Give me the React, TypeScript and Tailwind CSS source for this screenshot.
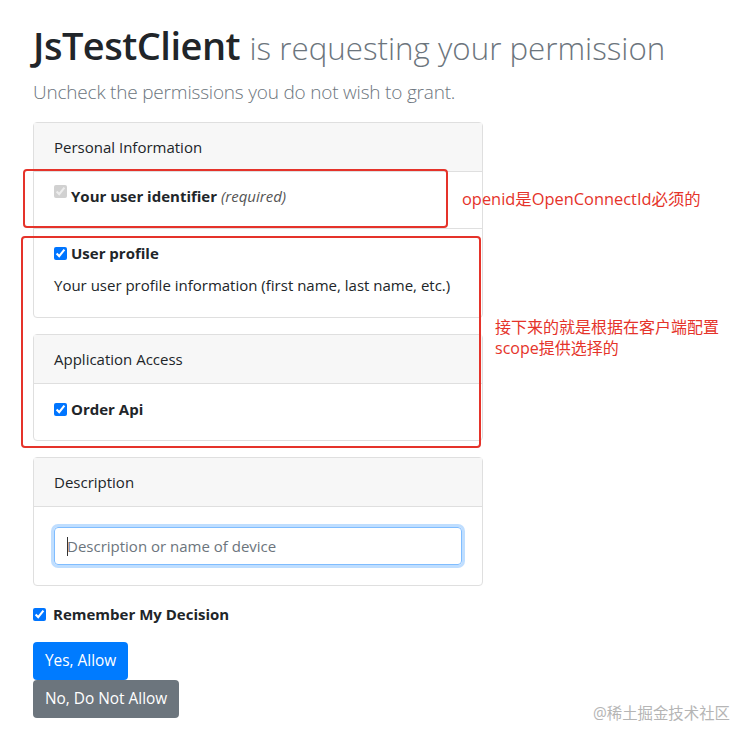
import React from "react";

const font = { fontFamily: '"Open Sans", "Noto Sans CJK SC", sans-serif' };

function Check({ disabled }: { disabled?: boolean }) {
  return (
    <input
      type="checkbox"
      defaultChecked
      disabled={disabled}
      className="w-[13px] h-[13px] m-0 shrink-0"
    />
  );
}

export default function App() {
  return (
    <div className="relative bg-white w-[736px] h-[729px] overflow-hidden text-[#212529]" style={font}>
      <div className="pl-[33px] pt-[19px]">
        <h1 className="text-[38px] leading-[52px] font-semibold tracking-[-0.5px] whitespace-nowrap">
          JsTestClient{" "}
          <span className="text-[31.3px] font-light text-[#6c757d] tracking-normal">is requesting your permission</span>
        </h1>
        <p className="text-[19px] font-light text-[#6c757d] leading-[28px] mt-[4px] tracking-[-0.2px]">
          Uncheck the permissions you do not wish to grant.
        </p>

        <div className="w-[450px] mt-[16px]">
          <div className="border border-[#dfdfdf] rounded-[4px] text-[15px]">
            <div className="bg-[#f7f7f7] h-[49px] px-[20px] flex items-center border-b border-[#dfdfdf]">
              Personal Information
            </div>
            <div className="h-[57px] px-[20px] pt-[13px] flex items-start gap-[4px] border-b border-[#dfdfdf] leading-[22px]">
              <Check disabled />
              <span className="font-bold">Your user identifier</span>
              <span className="italic text-[#555]">(required)</span>
            </div>
            <div className="h-[88px] px-[20px] pt-[13px]">
              <div className="flex items-center gap-[4px] leading-[22px]">
                <Check />
                <span className="font-bold">User profile</span>
              </div>
              <div className="mt-[10px] leading-[22px]">Your user profile information (first name, last name, etc.)</div>
            </div>
          </div>

          <div className="border border-[#dfdfdf] rounded-[4px] text-[15px] mt-[16px]">
            <div className="bg-[#f7f7f7] h-[49px] px-[20px] flex items-center border-b border-[#dfdfdf]">
              Application Access
            </div>
            <div className="h-[56px] px-[20px] pt-[14px] leading-[22px]">
              <div className="flex items-center gap-[4px]">
                <Check />
                <span className="font-bold">Order Api</span>
              </div>
            </div>
          </div>

          <div className="border border-[#dfdfdf] rounded-[4px] text-[15px] mt-[16px]">
            <div className="bg-[#f7f7f7] h-[49px] px-[20px] flex items-center border-b border-[#dfdfdf]">
              Description
            </div>
            <div className="h-[78px] px-[20px] flex items-center">
              <div className="relative w-full">
                <input
                  placeholder="Description or name of device"
                  className="w-full h-[38px] px-[12px] rounded-[4px] border border-[#80bdff] shadow-[0_0_0_3px_rgba(0,123,255,0.25)] outline-none placeholder:text-[#6c757d] text-[15px]"
                />
                <div className="absolute left-[13px] top-[10px] w-px h-[19px] bg-[#333]" />
              </div>
            </div>
          </div>

          <div className="flex items-center gap-[7px] mt-[17px] text-[15px]">
            <Check />
            <span className="font-bold">Remember My Decision</span>
          </div>

          <div className="mt-[16px] flex flex-col items-start text-[15.4px]">
            <button className="h-[38px] px-[12px] rounded-[4px] bg-[#007bff] text-white">Yes, Allow</button>
            <button className="h-[38px] px-[12px] rounded-[4px] bg-[#6c757d] text-white">No, Do Not Allow</button>
          </div>
        </div>
      </div>

      {/* annotations */}
      <div className="absolute left-[23px] top-[169px] w-[425px] h-[59px] border-2 border-[#e5332a] rounded-[4px]" />
      <div className="absolute left-[21px] top-[236px] w-[460px] h-[212px] border-2 border-[#e5332a] rounded-[4px]" />
      <div className="absolute left-[462px] top-[188px] text-[16.4px] text-[#e5332a] leading-[22px]">openid是OpenConnectId必须的</div>
      <div className="absolute left-[495px] top-[317px] text-[16px] text-[#e5332a] leading-[21px]">
        接下来的就是根据在客户端配置
        <br />
        scope提供选择的
      </div>
      <div className="absolute left-[593px] top-[704px] text-[15.4px] text-[#b5b5b5] leading-[20px]">@稀土掘金技术社区</div>
    </div>
  );
}
